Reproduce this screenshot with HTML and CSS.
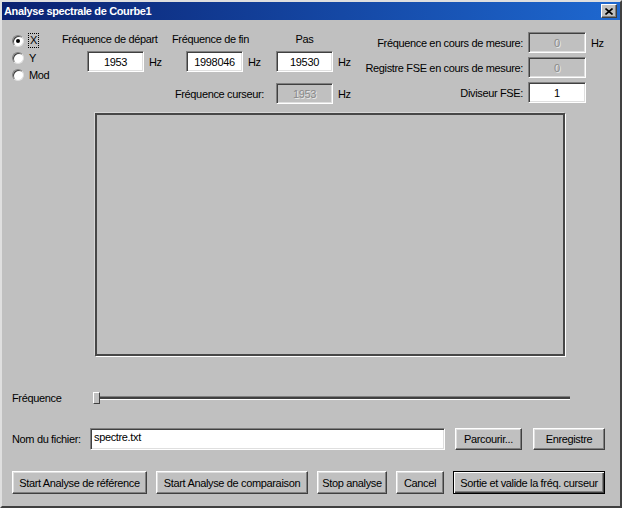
FILE: index.html
```html
<!DOCTYPE html>
<html lang="fr">
<head>
  <meta charset="UTF-8">
  <title>Analyse spectrale de Courbe1</title>
  <link rel="stylesheet" href="styles.css">
</head>
<body>
  <div class="window">
    <div class="titlebar">
      <span class="title">Analyse spectrale de Courbe1</span>
      <span class="close">
        <svg width="8" height="7" viewBox="0 0 8 7"><path d="M0.5 0.5 L7.5 6.5 M7.5 0.5 L0.5 6.5" stroke="#000" stroke-width="1.6"/></svg>
      </span>
    </div>

    <div class="top">
      <div class="radios">
        <div class="radio-row"><span class="radio checked"></span><span class="focus">X</span></div>
        <div class="radio-row"><span class="radio"></span><span>Y</span></div>
        <div class="radio-row"><span class="radio"></span><span>Mod</span></div>
      </div>

      <div class="params">
        <div class="param-row">
          <div class="field field-start">
            <div class="field-label">Fréquence de départ</div>
            <div class="field-input"><input class="edit" type="text" value="1953"><span class="unit">Hz</span></div>
          </div>
          <div class="field field-end">
            <div class="field-label">Fréquence de fin</div>
            <div class="field-input"><input class="edit" type="text" value="1998046"><span class="unit">Hz</span></div>
          </div>
          <div class="field field-step">
            <div class="field-label">Pas</div>
            <div class="field-input"><input class="edit" type="text" value="19530"><span class="unit">Hz</span></div>
          </div>
        </div>
        <div class="cursor-row">
          <span class="cursor-label">Fréquence curseur:</span>
          <input class="edit disabled" type="text" value="1953" disabled>
          <span class="unit">Hz</span>
        </div>
      </div>

      <div class="readouts">
        <span class="readout-label">Fréquence en cours de mesure:</span>
        <input class="edit disabled" type="text" value="0" disabled>
        <span class="unit">Hz</span>

        <span class="readout-label">Registre FSE en cours de mesure:</span>
        <input class="edit disabled" type="text" value="0" disabled>
        <span></span>

        <span class="readout-label">Diviseur FSE:</span>
        <input class="edit" type="text" value="1">
        <span></span>
      </div>
    </div>

    <div class="graph"></div>

    <div class="slider-row">
      <span class="row-label">Fréquence</span>
      <div class="slider">
        <div class="track"></div>
        <div class="thumb"></div>
      </div>
    </div>

    <div class="file-row">
      <span class="row-label">Nom du fichier:</span>
      <input class="edit file-name" type="text" value="spectre.txt">
      <button class="btn btn-browse">Parcourir...</button>
      <button class="btn btn-save">Enregistre</button>
    </div>

    <div class="actions">
      <button class="btn btn-ref">Start Analyse de référence</button>
      <button class="btn btn-cmp">Start Analyse de comparaison</button>
      <button class="btn btn-stop">Stop analyse</button>
      <button class="btn btn-cancel">Cancel</button>
      <button class="btn btn-default">Sortie et valide la fréq. curseur</button>
    </div>
  </div>
</body>
</html>
```

FILE: styles.css
```css
body {
  margin: 0;
  font-family: 'Liberation Sans', Arial, sans-serif;
  font-size: 11px;
  letter-spacing: -0.35px;
  color: #000;
  background: #c0c0c0;
}
.window {
  width: 622px;
  height: 508px;
  box-sizing: border-box;
  background-color: #c0c0c0;
  border: 2px solid;
  border-color: #dfdfdf #404040 #404040 #dfdfdf;
}
.titlebar {
  height: 18px;
  display: flex;
  align-items: center;
  justify-content: space-between;
  padding: 0 3px 0 2px;
  background: linear-gradient(to right, #0a2170, #1e68d0);
}
.title {
  color: #fff;
  font-weight: bold;
  font-size: 11px;
}
.close {
  width: 14px;
  height: 12px;
  display: flex;
  align-items: center;
  justify-content: center;
  background: #c0c0c0;
  border: 1px solid;
  border-color: #fff #404040 #404040 #fff;
  box-shadow: inset -1px -1px #808080;
}

/* zone du haut */
.top {
  display: flex;
  align-items: flex-start;
}
.radios {
  width: 60px;
  box-sizing: border-box;
  padding: 12px 0 0 10px;
}
.radio-row {
  height: 17px;
  display: flex;
  align-items: center;
  gap: 5px;
}
.radio {
  width: 10px;
  height: 10px;
  border-radius: 50%;
  background: #fff;
  border: 1px solid;
  border-color: #808080 #dfdfdf #dfdfdf #808080;
  box-shadow: inset 1px 1px #404040;
  display: flex;
  align-items: center;
  justify-content: center;
}
.radio.checked::after {
  content: "";
  width: 4px;
  height: 4px;
  border-radius: 50%;
  background: #000;
}
.focus {
  outline: 1px dotted #000;
  line-height: 13px;
  padding: 0 1px;
}

.params {
  padding-top: 13px;
}
.param-row {
  display: flex;
}
.field-label {
  line-height: 13px;
  white-space: nowrap;
}
.field-input {
  display: flex;
  align-items: center;
  gap: 5px;
  margin-top: 5px;
}
.field-start {
  width: 110px;
}
.field-start .field-input {
  padding-left: 25px;
}
.field-end {
  width: 104px;
}
.field-end .field-input {
  padding-left: 14px;
}
.field-step .field-label {
  width: 57px;
  text-align: center;
}
.cursor-row {
  display: flex;
  align-items: center;
  margin-top: 11px;
}
.cursor-label {
  width: 202px;
  text-align: right;
  margin-right: 12px;
}
.cursor-row .unit {
  margin-left: 5px;
}

.edit {
  width: 57px;
  height: 21px;
  box-sizing: border-box;
  margin: 0;
  padding: 0 2px;
  font-family: inherit;
  font-size: 11px;
  letter-spacing: -0.35px;
  color: #000;
  text-align: center;
  background: #fff;
  border: 1px solid;
  border-color: #808080 #fff #fff #808080;
  box-shadow: inset 1px 1px #404040, inset -1px -1px #dfdfdf;
  outline: none;
}
.edit.disabled {
  background: #c0c0c0;
  color: #8a8a8a;
  text-shadow: 1px 1px #e8e8e8;
}

.readouts {
  margin-left: auto;
  margin-right: 9px;
  padding-top: 12px;
  display: grid;
  grid-template-columns: auto 58px 20px;
  column-gap: 5px;
  row-gap: 4px;
  align-items: center;
}
.readouts .edit {
  width: 58px;
}
.readout-label {
  text-align: right;
  white-space: nowrap;
}

/* zone graphique */
.graph {
  width: 470px;
  height: 243px;
  box-sizing: border-box;
  margin: 9px 0 0 93px;
  border: 2px solid #474747;
  box-shadow: 1px 1px 0 #fff, -1px -1px 0 #d8d8d8;
}

.row-label {
  white-space: nowrap;
}
.slider-row {
  display: flex;
  align-items: center;
  height: 14px;
  margin-top: 35px;
  padding-left: 10px;
}
.slider-row .row-label {
  width: 81px;
}
.slider {
  position: relative;
  width: 477px;
  height: 14px;
}
.track {
  margin-top: 5px;
  height: 2px;
  border-top: 1px solid #808080;
  border-bottom: 1px solid #fff;
  background: #404040;
}
.thumb {
  position: absolute;
  left: 0;
  top: 1px;
  width: 5px;
  height: 10px;
  background: #c0c0c0;
  border: 1px solid;
  border-color: #fff #404040 #404040 #fff;
}

.file-row {
  display: flex;
  align-items: center;
  margin-top: 23px;
  padding-left: 10px;
}
.file-row .row-label {
  width: 78px;
}
.file-name {
  width: 355px;
  height: 22px;
  text-align: left;
  padding: 0 3px 4px;
}
.btn {
  height: 22px;
  box-sizing: border-box;
  margin: 0;
  padding: 0;
  font-family: inherit;
  font-size: 11px;
  letter-spacing: -0.35px;
  color: #000;
  background: #c0c0c0;
  border: 1px solid;
  border-color: #fff #404040 #404040 #fff;
  box-shadow: inset -1px -1px #808080, inset 1px 1px #dfdfdf;
  white-space: nowrap;
}
.btn-browse {
  width: 67px;
  margin-left: 10px;
}
.btn-save {
  width: 72px;
  margin-left: 11px;
}

.actions {
  display: flex;
  gap: 9px;
  margin-top: 21px;
  padding-left: 10px;
}
.actions .btn {
  height: 23px;
}
.btn-ref { width: 135px; }
.btn-cmp { width: 152px; }
.btn-stop { width: 70px; }
.btn-cancel { width: 48px; }
.btn-default {
  width: 152px;
  border: 1px solid #000;
  box-shadow: inset 1px 1px #fff, inset -1px -1px #404040, inset -2px -2px #808080;
}
```
